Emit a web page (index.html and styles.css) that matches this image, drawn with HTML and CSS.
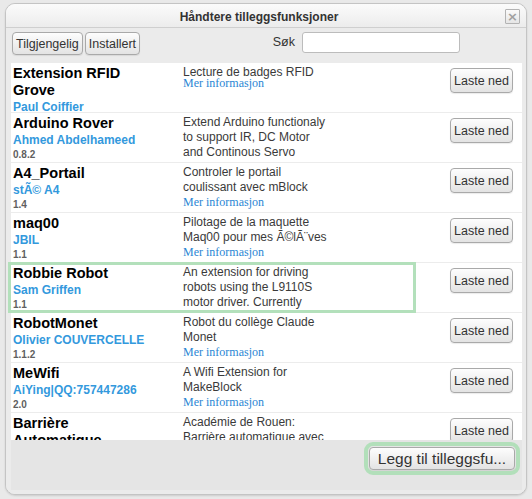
FILE: index.html
```html
<!DOCTYPE html>
<html lang="no">
<head>
<meta charset="utf-8">
<title>Håndtere tilleggsfunksjoner</title>
<link rel="stylesheet" href="styles.css">
</head>
<body>
<div class="dialog">
  <div class="titlebar">
    <span class="title">Håndtere tilleggsfunksjoner</span>
    <button class="close" type="button">×</button>
  </div>
  <div class="body">
    <div class="toolbar">
      <div class="tabs">
        <button class="btn tab" type="button">Tilgjengelig</button>
        <button class="btn tab" type="button">Installert</button>
      </div>
      <label class="search"><span class="search-label">Søk</span><input class="search-input" type="text"></label>
    </div>
    <div class="list">
      <div class="row">
        <div class="info">
          <div class="meta"><div class="name">Extension RFID Grove</div><div class="author">Paul Coiffier</div><div class="version">1.0</div></div>
          <div class="desc"><p class="text">Lecture de badges RFID</p><a class="more more--tight">Mer informasjon</a></div>
        </div>
        <button class="btn dl" type="button">Laste ned</button>
      </div>
      <div class="row">
        <div class="info">
          <div class="meta"><div class="name">Arduino Rover</div><div class="author">Ahmed Abdelhameed</div><div class="version">0.8.2</div></div>
          <div class="desc"><p class="text">Extend Arduino functionaly to support IR, DC Motor and Continous Servo</p><a class="more">Mer informasjon</a></div>
        </div>
        <button class="btn dl" type="button">Laste ned</button>
      </div>
      <div class="row">
        <div class="info">
          <div class="meta"><div class="name">A4_Portail</div><div class="author">stÃ© A4</div><div class="version">1.4</div></div>
          <div class="desc"><p class="text">Controler le portail coulissant avec mBlock</p><a class="more">Mer informasjon</a></div>
        </div>
        <button class="btn dl" type="button">Laste ned</button>
      </div>
      <div class="row">
        <div class="info">
          <div class="meta"><div class="name">maq00</div><div class="author">JBIL</div><div class="version">1.1</div></div>
          <div class="desc"><p class="text">Pilotage de la maquette Maq00 pour mes Ã©lÃ¨ves</p><a class="more">Mer informasjon</a></div>
        </div>
        <button class="btn dl" type="button">Laste ned</button>
      </div>
      <div class="row row--focus">
        <div class="info">
          <div class="meta"><div class="name">Robbie Robot</div><div class="author">Sam Griffen</div><div class="version">1.1</div></div>
          <div class="desc"><p class="text">An extension for driving robots using the L9110S motor driver. Currently supports two motors.</p><a class="more">Mer informasjon</a></div>
        </div>
        <button class="btn dl" type="button">Laste ned</button>
      </div>
      <div class="row">
        <div class="info">
          <div class="meta"><div class="name">RobotMonet</div><div class="author">Olivier COUVERCELLE</div><div class="version">1.1.2</div></div>
          <div class="desc"><p class="text">Robot du collège Claude Monet</p><a class="more">Mer informasjon</a></div>
        </div>
        <button class="btn dl" type="button">Laste ned</button>
      </div>
      <div class="row">
        <div class="info">
          <div class="meta"><div class="name">MeWifi</div><div class="author">AiYing|QQ:757447286</div><div class="version">2.0</div></div>
          <div class="desc"><p class="text">A Wifi Extension for MakeBlock</p><a class="more">Mer informasjon</a></div>
        </div>
        <button class="btn dl" type="button">Laste ned</button>
      </div>
      <div class="row">
        <div class="info">
          <div class="meta"><div class="name">Barrière Automatique</div><div class="author">Collège</div><div class="version">1.0</div></div>
          <div class="desc"><p class="text">Académie de Rouen: Barrière automatique avec mBlock</p><a class="more">Mer informasjon</a></div>
        </div>
        <button class="btn dl" type="button">Laste ned</button>
      </div>
    </div>
    <div class="footer">
      <button class="btn add" type="button">Legg til tilleggsfu...</button>
    </div>
  </div>
</div>
</body>
</html>
```
FILE: styles.css
```css
* { box-sizing: border-box; }

html, body {
  margin: 0;
  padding: 0;
  background: #e9e9e9;
  font-family: "Liberation Sans", Arial, sans-serif;
}

body {
  padding: 3px 5px 4px 5px;
}

.dialog {
  width: 522px;
  height: 492px;
  border: 1px solid #c4c4c4;
  border-radius: 10px;
  background: #f1f1f1;
  box-shadow: 0 1px 2px rgba(0, 0, 0, 0.12);
  display: flex;
  flex-direction: column;
  overflow: hidden;
}

.titlebar {
  height: 24px;
  flex: none;
  display: flex;
  align-items: flex-start;
  border-bottom: 1px solid #cfcfcf;
  background: linear-gradient(#fbfbfb, #ececec);
}

.title {
  flex: 1;
  text-align: center;
  padding: 3px 0 0 7px;
  font-size: 12px;
  line-height: 20px;
  font-weight: bold;
  color: #333;
}

.close {
  width: 15px;
  height: 15px;
  margin: 5px 6px 0 0;
  padding: 0;
  border: 1px solid #b3b3b3;
  border-radius: 1px;
  background: linear-gradient(#fafafa, #e6e6e6);
  color: #a0a0a0;
  font-family: "DejaVu Sans", sans-serif;
  font-size: 13px;
  font-weight: bold;
  line-height: 12px;
  text-align: center;
}

.body {
  flex: 1;
  display: flex;
  flex-direction: column;
  padding: 0 4px 4px 5px;
  background: #ebebeb;
}

.toolbar {
  height: 35px;
  flex: none;
  display: flex;
  align-items: flex-start;
  justify-content: space-between;
  padding: 4px 0 0 1px;
}

.tabs {
  display: flex;
  gap: 2px;
}

.btn {
  font-family: "Liberation Sans", Arial, sans-serif;
  color: #333;
  border: 1px solid #a9a9a9;
  border-radius: 4px;
  background: linear-gradient(#fdfdfd, #e3e3e3);
  box-shadow: 0 1px 1px rgba(0, 0, 0, 0.08);
  padding: 0;
}

.tab {
  height: 23px;
  padding: 0 3px;
  font-size: 12.5px;
}

.search {
  display: flex;
  align-items: center;
  gap: 7px;
  margin-right: 62px;
}

.search-label {
  font-size: 12.5px;
  color: #333;
  line-height: 21px;
}

.search-input {
  width: 158px;
  height: 21px;
  border: 1px solid #bcbcbc;
  border-radius: 3px;
  background: #fff;
  padding: 0 4px;
}

.list {
  height: 377px;
  flex: none;
  background: #fff;
  overflow-x: visible;
  overflow-y: clip;
}

.row {
  height: 50px;
  display: flex;
  align-items: flex-start;
  border-bottom: 1px solid #ececec;
}

.info {
  width: 406px;
  height: 49px;
  margin-left: -2px;
  padding: 2px 0 0 4px;
  display: flex;
  overflow: hidden;
}

.row--focus .info {
  outline: 3px solid #b3e0bb;
  outline-offset: -2px;
}

.meta {
  width: 140px;
  margin-right: 30px;
  flex: none;
}

.name {
  font-size: 14.5px;
  line-height: 17px;
  font-weight: bold;
  color: #000;
}

.author {
  font-size: 12px;
  line-height: 16px;
  font-weight: bold;
  color: #3399dd;
  white-space: nowrap;
}

.version {
  font-size: 10px;
  line-height: 13px;
  font-weight: bold;
  color: #5f5f5f;
}

.desc {
  width: 150px;
  flex: none;
}

.text {
  margin: 0;
  font-size: 12px;
  line-height: 15px;
  color: #3a3a3a;
}

.more {
  display: block;
  font-family: "Liberation Serif", "Times New Roman", serif;
  font-size: 12px;
  line-height: 15px;
  color: #2a86d4;
}

.more--tight {
  margin-top: -4px;
}

.dl {
  flex: none;
  margin: 5px 9px 0 auto;
  width: 63px;
  height: 25px;
  font-size: 12.5px;
}

.footer {
  flex: 1;
  display: flex;
  justify-content: flex-end;
  align-items: flex-start;
  padding: 7px 7px 0 0;
  background: #e5e5e5;
}

.add {
  height: 23px;
  width: 146px;
  font-size: 15.5px;
  outline: 4px solid #b2dfba;
  outline-offset: 1px;
}
```
